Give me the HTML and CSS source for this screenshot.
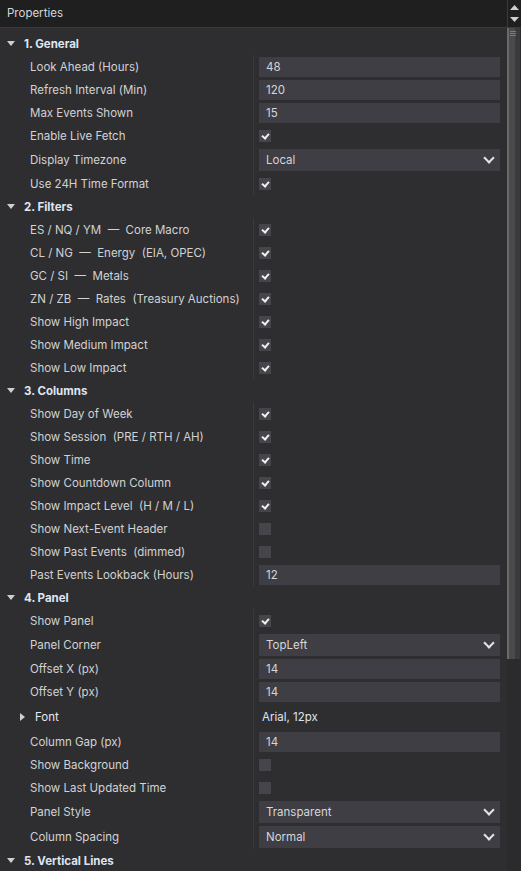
FILE: index.html
```html
<!DOCTYPE html>
<html>
<head>
<meta charset="utf-8">
<link rel="stylesheet" href="styles.css">
</head>
<body>
<div class="panel">
  <div class="titlebar">
    <div class="title">Properties</div>
    <div class="spin">
      <svg width="9" height="5" viewBox="0 0 9 5"><path d="M0 5 L4.5 0 L9 5Z" fill="#cfcfcf"/></svg>
      <svg width="9" height="5" viewBox="0 0 9 5"><path d="M0 0 L4.5 5 L9 0Z" fill="#cfcfcf"/></svg>
    </div>
  </div>
  <div class="body">
    <div class="content">

      <div class="section"><span class="tri"></span><span class="stitle">1. General</span></div>
      <div class="group">
        <div class="row"><div class="lbl">Look Ahead (Hours)</div><div class="val"><div class="input">48</div></div></div>
        <div class="row"><div class="lbl">Refresh Interval (Min)</div><div class="val"><div class="input">120</div></div></div>
        <div class="row"><div class="lbl">Max Events Shown</div><div class="val"><div class="input">15</div></div></div>
        <div class="row"><div class="lbl">Enable Live Fetch</div><div class="val"><span class="cb on"></span></div></div>
        <div class="row tall"><div class="lbl">Display Timezone</div><div class="val"><div class="select">Local<span class="chev"></span></div></div></div>
        <div class="row"><div class="lbl">Use 24H Time Format</div><div class="val"><span class="cb on"></span></div></div>
      </div>

      <div class="section"><span class="tri"></span><span class="stitle">2. Filters</span></div>
      <div class="group">
        <div class="row"><div class="lbl">ES / NQ / YM &nbsp;—&nbsp; Core Macro</div><div class="val"><span class="cb on"></span></div></div>
        <div class="row"><div class="lbl">CL / NG &nbsp;—&nbsp; Energy &nbsp;(EIA, OPEC)</div><div class="val"><span class="cb on"></span></div></div>
        <div class="row"><div class="lbl">GC / SI &nbsp;—&nbsp; Metals</div><div class="val"><span class="cb on"></span></div></div>
        <div class="row"><div class="lbl">ZN / ZB &nbsp;—&nbsp; Rates &nbsp;(Treasury Auctions)</div><div class="val"><span class="cb on"></span></div></div>
        <div class="row"><div class="lbl">Show High Impact</div><div class="val"><span class="cb on"></span></div></div>
        <div class="row"><div class="lbl">Show Medium Impact</div><div class="val"><span class="cb on"></span></div></div>
        <div class="row"><div class="lbl">Show Low Impact</div><div class="val"><span class="cb on"></span></div></div>
      </div>

      <div class="section"><span class="tri"></span><span class="stitle">3. Columns</span></div>
      <div class="group">
        <div class="row"><div class="lbl">Show Day of Week</div><div class="val"><span class="cb on"></span></div></div>
        <div class="row"><div class="lbl">Show Session &nbsp;(PRE / RTH / AH)</div><div class="val"><span class="cb on"></span></div></div>
        <div class="row"><div class="lbl">Show Time</div><div class="val"><span class="cb on"></span></div></div>
        <div class="row"><div class="lbl">Show Countdown Column</div><div class="val"><span class="cb on"></span></div></div>
        <div class="row"><div class="lbl">Show Impact Level &nbsp;(H / M / L)</div><div class="val"><span class="cb on"></span></div></div>
        <div class="row"><div class="lbl">Show Next-Event Header</div><div class="val"><span class="cb"></span></div></div>
        <div class="row"><div class="lbl">Show Past Events &nbsp;(dimmed)</div><div class="val"><span class="cb"></span></div></div>
        <div class="row"><div class="lbl">Past Events Lookback (Hours)</div><div class="val"><div class="input">12</div></div></div>
      </div>

      <div class="section"><span class="tri"></span><span class="stitle">4. Panel</span></div>
      <div class="group">
        <div class="row"><div class="lbl">Show Panel</div><div class="val"><span class="cb on"></span></div></div>
        <div class="row tall"><div class="lbl">Panel Corner</div><div class="val"><div class="select">TopLeft<span class="chev"></span></div></div></div>
        <div class="row"><div class="lbl">Offset X (px)</div><div class="val"><div class="input">14</div></div></div>
        <div class="row"><div class="lbl">Offset Y (px)</div><div class="val"><div class="input">14</div></div></div>
        <div class="row font"><div class="lbl sub"><span class="tri right"></span><span class="ftitle">Font</span></div><div class="val"><span class="fval">Arial, 12px</span></div></div>
        <div class="row"><div class="lbl">Column Gap (px)</div><div class="val"><div class="input">14</div></div></div>
        <div class="row"><div class="lbl">Show Background</div><div class="val"><span class="cb"></span></div></div>
        <div class="row"><div class="lbl">Show Last Updated Time</div><div class="val"><span class="cb"></span></div></div>
        <div class="row tall"><div class="lbl">Panel Style</div><div class="val"><div class="select">Transparent<span class="chev"></span></div></div></div>
        <div class="row tall"><div class="lbl">Column Spacing</div><div class="val"><div class="select">Normal<span class="chev"></span></div></div></div>
      </div>

      <div class="section"><span class="tri"></span><span class="stitle">5. Vertical Lines</span></div>
    </div>
    <div class="scrollbar">
      <div class="thumb"><span class="grip"></span></div>
    </div>
  </div>
</div>
</body>
</html>
```
FILE: styles.css
```css
* { box-sizing: border-box; }
html, body { margin: 0; padding: 0; }
body {
  background: #2e2e31;
  font-family: Inter, "Noto Sans", sans-serif;
  font-size: 11.5px;
  color: #d2d2d2;
  width: 521px;
  height: 871px;
  overflow: hidden;
}
.panel { width: 521px; height: 871px; display: flex; flex-direction: column; }
.titlebar {
  height: 28px;
  flex: 0 0 28px;
  background: #1f1f1f;
  border-bottom: 1px solid #3a3a3c;
  display: flex;
  align-items: stretch;
}
.title { flex: 1; padding-left: 7px; line-height: 27px; color: #d6d6d6; }
.spin {
  width: 14px;
  border-left: 1px solid #3a3a3c;
  display: flex;
  flex-direction: column;
  justify-content: center;
  align-items: center;
  gap: 7px;
}
.body { flex: 1; display: flex; overflow: hidden; }
.content { flex: 1; padding-top: 4px; padding-right: 7px; }
.section {
  height: 23px;
  display: flex;
  align-items: center;
  padding-left: 7px;
}
.tri {
  width: 0; height: 0;
  border-left: 4px solid transparent;
  border-right: 4px solid transparent;
  border-top: 5px solid #cfcfcf;
  margin-right: 9px;
}
.tri.right {
  border-top: 4px solid transparent;
  border-bottom: 4px solid transparent;
  border-left: 5px solid #cfcfcf;
  border-right: 0;
  margin-right: 10px;
}
.stitle { font-weight: 700; color: #dfe5f2; }
.group { display: flex; flex-direction: column; }
.row {
  height: 23px;
  display: grid;
  grid-template-columns: 253px 1fr;
}
.row.tall { height: 25px; }
.row.font { height: 27px; }
.lbl { padding-left: 30px; display: flex; align-items: center; white-space: nowrap; }
.lbl.sub { padding-left: 20px; }
.ftitle { color: #e6e8f0; }
.val {
  border-left: 1px solid #3a3a3c;
  padding-left: 5px;
  display: flex;
  align-items: center;
}
.input {
  width: 241px;
  height: 20px;
  background: #3e3e44;
  padding-left: 7px;
  display: flex;
  align-items: center;
  color: #d6d6d6;
}
.select {
  width: 241px;
  height: 22px;
  background: #3e3e44;
  padding-left: 7px;
  display: flex;
  align-items: center;
  justify-content: space-between;
  color: #d6d6d6;
}
.chev {
  width: 8px; height: 8px;
  border-right: 2px solid #e4e4e4;
  border-bottom: 2px solid #e4e4e4;
  transform: rotate(45deg);
  margin-right: 7px;
  margin-top: -4px;
}
.cb {
  width: 12px; height: 12px;
  background: #45454b;
  position: relative;
}
.cb.on::after {
  content: "";
  position: absolute;
  left: 4px; top: 2px;
  width: 3px; height: 5px;
  border-right: 2px solid #f0f0f0;
  border-bottom: 2px solid #f0f0f0;
  transform: rotate(40deg);
}
.fval { color: #dfe5f2; padding-left: 3px; }
.scrollbar {
  width: 14px;
  flex: 0 0 14px;
  background: #2b2b2d;
}
.thumb {
  width: 13px;
  height: 631px;
  background: #4a4a4c;
  border-left: 2px solid #6a6a6a;
  border-right: 5px solid #3a3a3c;
  position: relative;
}
.grip {
  position: absolute;
  left: 1px; top: 3px;
  width: 6px; height: 5px;
  border-top: 1px solid #7a7a7a;
  border-bottom: 1px solid #7a7a7a;
}
.grip::after {
  content: "";
  position: absolute;
  left: 0; top: 1px; width: 6px; height: 1px;
  background: #7a7a7a;
}
```
